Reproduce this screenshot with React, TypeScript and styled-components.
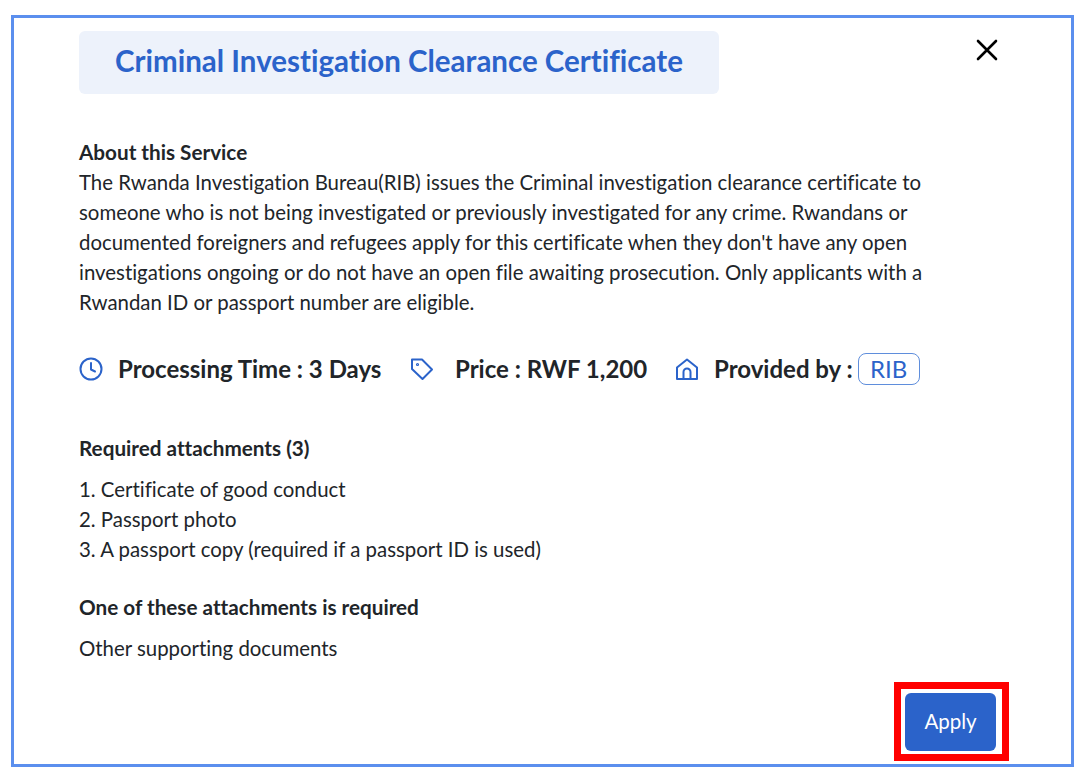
import React from "react";
import styled, { createGlobalStyle } from "styled-components";

const Global = createGlobalStyle`
  html, body { margin: 0; padding: 0; background: #fff; }
  body { font-family: Lato, "Noto Sans", sans-serif; color: #212529; font-variant-ligatures: none; }
`;
const Frame = styled.div`
  box-sizing: border-box; margin: 15px 5px 0 11px; width: 1063px; height: 752px;
  border: 3px solid #5b8fee; padding: 13px 73px 0 65px; position: relative; background: #fff;
`;
const TitleBox = styled.div`
  width: 640px; height: 63px; box-sizing: border-box; background: #edf2fb; border-radius: 6px; padding-bottom: 5px;
  display: flex; align-items: center; justify-content: center;
`;
const Title = styled.h1`
  margin: 0; font-size: 29.5px; font-weight: 700; color: #2b63ca; white-space: nowrap;
`;
const Close = styled.button`
  position: absolute; top: 19px; right: 71px; width: 26px; height: 26px; padding: 0; border: 0; background: none;
`;
const Bold = styled.div`
  font-size: 20.7px; font-weight: 700; line-height: 30px; color: #212529;
`;
const Para = styled.p`
  margin: 1px 0 0; font-size: 20.4px; line-height: 29.9px; width: 880px; color: #212529;
`;
const About = styled.section`margin-top: 43px;`;
const Meta = styled.div`display: flex; align-items: center; margin-top: 34px; height: 34px;`;
const MetaItem = styled.div<{ $width: number; $gap: number }>`
  display: flex; align-items: center; width: ${p => p.$width}px; font-size: 24px; font-weight: 700; white-space: nowrap;
  svg { margin-right: ${p => p.$gap}px; color: #2b63ca; flex: none; }
`;
const Badge = styled.span`
  margin-left: 5px; width: 62px; box-sizing: border-box; text-align: center; border: 1px solid #5f8edc; border-radius: 8px; color: #2b63ca; font-weight: 400; font-size: 24px;
  line-height: 30px;
`;
const Sec = styled.div<{ $top: number }>`margin-top: ${p => p.$top}px;`;
const List = styled.ol`margin: 11px 0 0; padding: 0; list-style: none; font-size: 20.4px; line-height: 30px;`;
const Highlight = styled.div`
  position: absolute; left: 880px; top: 664px; width: 115px; height: 79px; box-sizing: border-box;
  border: 7px solid #f00; padding: 4px 0 0 4px; display: flex; align-items: flex-start; justify-content: flex-start;
`;
const Apply = styled.button`
  width: 91px; height: 58px; background: #2b63ca; color: #fff; border: 0; border-radius: 6px; flex: none;
  font-family: inherit; font-size: 20.5px; padding: 0 0 2px;
`;

export default function App() {
  return (
    <>
      <Global />
      <Frame>
        <TitleBox><Title>Criminal Investigation Clearance Certificate</Title></TitleBox>
        <Close aria-label="Close">
          <svg width="26" height="26" viewBox="0 0 26 26"><path d="M4 4 L22 22 M22 4 L4 22" stroke="#000" strokeWidth="2.6" strokeLinecap="round" /></svg>
        </Close>
        <About>
          <Bold>About this Service</Bold>
          <Para>The Rwanda Investigation Bureau(RIB) issues the Criminal investigation clearance certificate to someone who is not being investigated or previously investigated for any crime. Rwandans or documented foreigners and refugees apply for this certificate when they don't have any open investigations ongoing or do not have an open file awaiting prosecution. Only applicants with a Rwandan ID or passport number are eligible.</Para>
        </About>
        <Meta>
          <MetaItem $width={331} $gap={15}>
            <svg width="24" height="24" viewBox="0 0 24 24" fill="none" stroke="currentColor" strokeWidth="2" strokeLinecap="round" strokeLinejoin="round"><circle cx="12" cy="12" r="10.5" /><path d="M12 6v6.5l4 2" /></svg>
            Processing Time : 3 Days
          </MetaItem>
          <MetaItem $width={265} $gap={21}>
            <svg width="24" height="24" viewBox="0 0 24 24" fill="none" stroke="currentColor" strokeWidth="2" strokeLinecap="round" strokeLinejoin="round"><path d="M2 2.5h10l10 10-9.5 9.5L2 12z" /><circle cx="7.5" cy="7.5" r="0.6" /></svg>
            Price : RWF 1,200
          </MetaItem>
          <MetaItem $width={260} $gap={15}>
            <svg width="24" height="24" viewBox="0 0 24 24" fill="none" stroke="currentColor" strokeWidth="2" strokeLinecap="round" strokeLinejoin="round"><path d="M2 10.5 12 2.5l10 8V22H2z" /><path d="M8.5 22v-7a3.5 3.5 0 0 1 7 0v7" /></svg>
            Provided by :<Badge>RIB</Badge>
          </MetaItem>
        </Meta>
        <Sec $top={47}>
          <Bold>Required attachments (3)</Bold>
          <List>
            <li>1. Certificate of good conduct</li>
            <li>2. Passport photo</li>
            <li>3. A passport copy (required if a passport ID is used)</li>
          </List>
        </Sec>
        <Sec $top={28}>
          <Bold>One of these attachments is required</Bold>
          <List><li>Other supporting documents</li></List>
        </Sec>
        <Highlight><Apply>Apply</Apply></Highlight>
      </Frame>
    </>
  );
}
